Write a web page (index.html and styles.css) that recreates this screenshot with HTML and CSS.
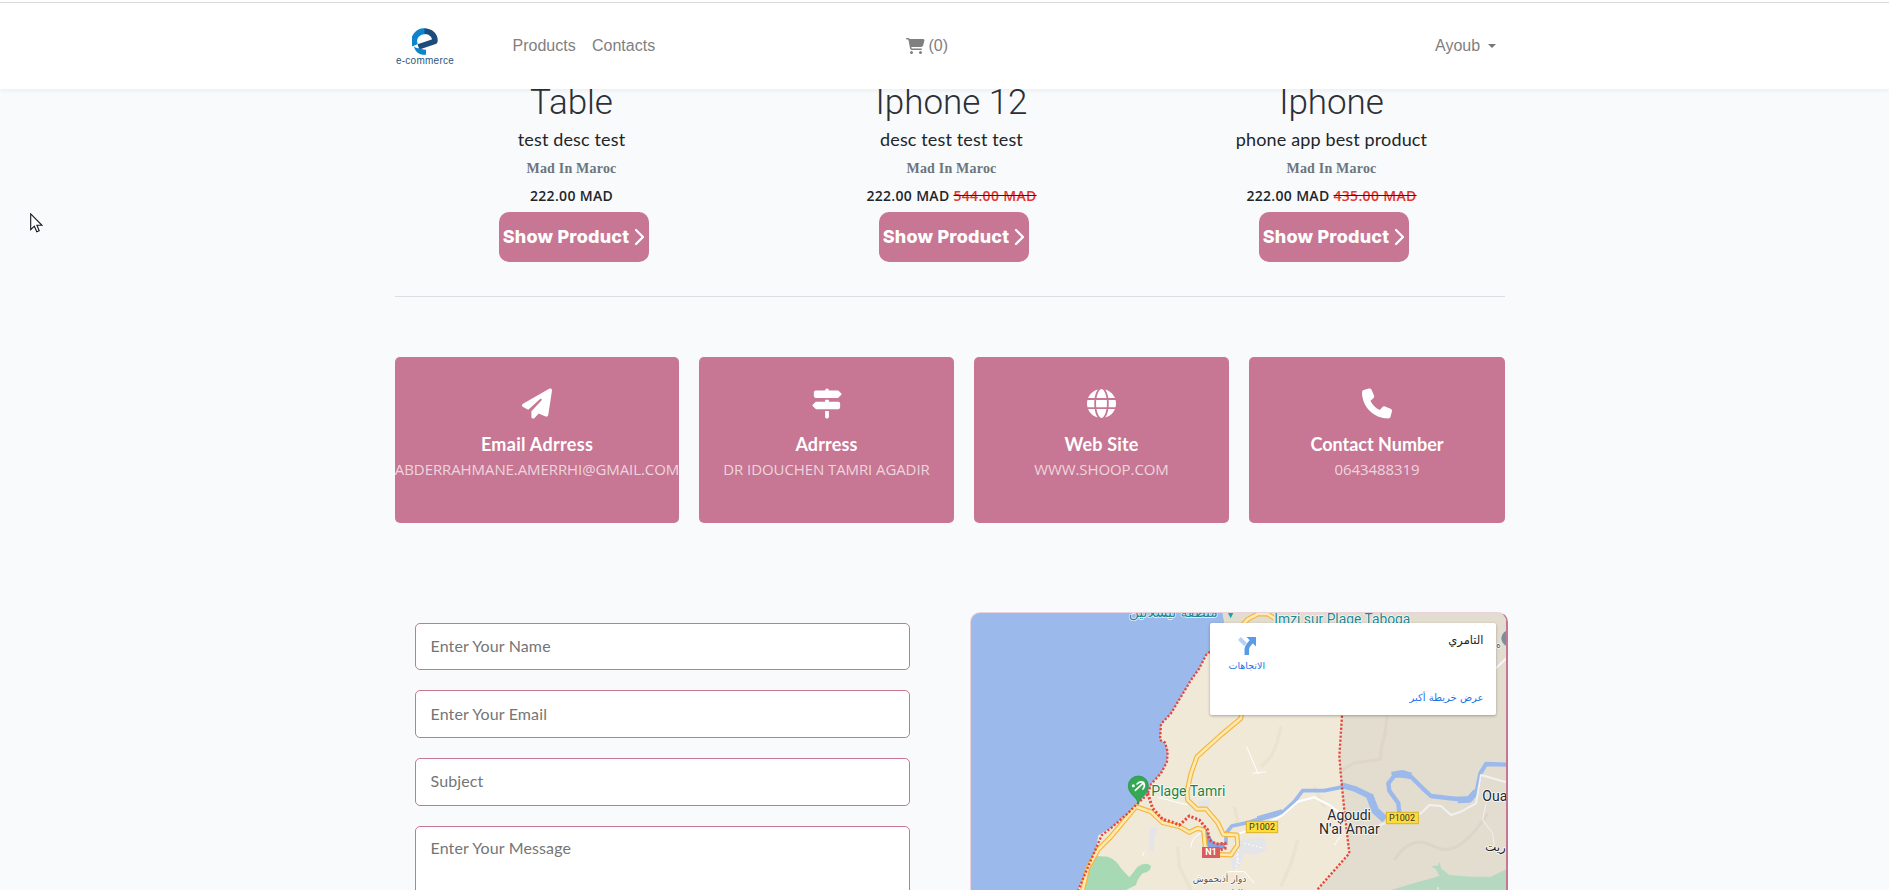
FILE: index.html
```html
<!DOCTYPE html>
<html lang="en">
<head>
<meta charset="utf-8">
<title>e-commerce</title>
<link rel="stylesheet" href="styles.css">
</head>
<body>
<nav class="navbar">
  <div class="container nav-inner">
    <a class="brand">
      <svg class="brand-mark" viewBox="0 0 26 27">
        <path d="M3 17.2A10 10 0 0 1 14 3.4" fill="none" stroke="#0d84cc" stroke-width="6"/>
        <path d="M12.500 3.300C19 3 23.500 8 22.800 13.300L6.500 18.800" fill="none" stroke="#1f4a7c" stroke-width="5.600" stroke-linejoin="round"/>
        <path d="M2 18.500C4 20 5.500 20 8 20.500C10 21 11.500 22 14 21.700V26.800C7 27.300 3 23.500 2 18.500Z" fill="#0d84cc"/>
      </svg>
      <span class="brand-name">e-commerce</span>
    </a>
    <a class="nav-link link-products">Products</a>
    <a class="nav-link link-contacts">Contacts</a>
    <a class="nav-link link-cart">
      <svg class="cart" viewBox="0 0 576 512"><path d="M0 24C0 10.700 10.700 0 24 0H69.500c22 0 41.500 12.800 50.600 32H551c26.300 0 45.500 25 38.600 50.400l-41 152.300c-8.500 31.400-37 53.300-69.500 53.300H170.700l5.400 28.500c2.200 11.300 12.100 19.500 23.600 19.500H488c13.300 0 24 10.700 24 24s-10.700 24-24 24H199.700c-34.600 0-64.300-24.600-70.700-58.500L77.400 54.500c-.7-3.800-4-6.500-7.900-6.500H24C10.700 48 0 37.300 0 24zM128 464a48 48 0 1 1 96 0 48 48 0 1 1-96 0zm336-48a48 48 0 1 1 0 96 48 48 0 1 1 0-96z"/></svg>(0)</a>
    <a class="nav-link link-user">Ayoub<span class="caret"></span></a>
  </div>
</nav>

<main>
  <section class="products">
    <article class="product">
      <h2>Table</h2>
      <p class="desc">test desc test</p>
      <p class="origin">Mad In Maroc</p>
      <p class="price">222.00 MAD</p>
      <a class="btn">Show Product<svg class="chev" viewBox="0 0 11 18"><path d="M2 2l7 7-7 7"/></svg></a>
    </article>
    <article class="product">
      <h2>Iphone 12</h2>
      <p class="desc">desc test test test</p>
      <p class="origin">Mad In Maroc</p>
      <p class="price">222.00 MAD <del><span>544.00 MAD</span></del></p>
      <a class="btn">Show Product<svg class="chev" viewBox="0 0 11 18"><path d="M2 2l7 7-7 7"/></svg></a>
    </article>
    <article class="product">
      <h2>Iphone</h2>
      <p class="desc">phone app best product</p>
      <p class="origin">Mad In Maroc</p>
      <p class="price">222.00 MAD <del><span>435.00 MAD</span></del></p>
      <a class="btn">Show Product<svg class="chev" viewBox="0 0 11 18"><path d="M2 2l7 7-7 7"/></svg></a>
    </article>
  </section>

  <div class="container">
    <hr class="divider">
    <section class="cards">
      <div class="card">
        <svg class="icon" viewBox="0 0 512 512"><path d="M498.100 5.600c10.100 7 15.400 19.100 13.500 31.200l-64 416c-1.500 9.700-7.400 18.200-16 23s-18.900 5.400-28 1.600L284 427.700l-68.500 74.100c-8.900 9.700-22.900 12.900-35.200 8.100S160 493.200 160 480V396.400c0-4 1.500-7.800 4.200-10.700L331.800 202.800c5.800-6.300 5.600-16-.4-22s-15.700-6.400-22-.7L106 360.800 17.700 316.600C7.100 311.300 .3 300.700 0 288.900s5.900-22.800 16.100-28.700l448-256c10.700-6.100 23.900-5.500 34 1.400z"/></svg>
        <h3>Email Adrress</h3>
        <p>ABDERRAHMANE.AMERRHI@GMAIL.COM</p>
      </div>
      <div class="card">
        <svg class="icon" viewBox="0 0 512 512"><path d="M224 32H64C46.300 32 32 46.300 32 64v64c0 17.700 14.300 32 32 32H441.400c4.200 0 8.300-1.700 11.300-4.700l48-48c6.200-6.200 6.200-16.400 0-22.600l-48-48c-3-3-7.100-4.700-11.300-4.700H288c0-17.700-14.300-32-32-32s-32 14.300-32 32zM480 256c0-17.700-14.300-32-32-32H288V192H224v32H70.600c-4.200 0-8.300 1.700-11.300 4.700l-48 48c-6.200 6.200-6.200 16.400 0 22.600l48 48c3 3 7.100 4.700 11.300 4.700H448c17.700 0 32-14.300 32-32V256zM288 480V384H224v96c0 17.700 14.300 32 32 32s32-14.300 32-32z"/></svg>
        <h3>Adrress</h3>
        <p>DR IDOUCHEN TAMRI AGADIR</p>
      </div>
      <div class="card">
        <svg class="icon" viewBox="0 0 512 512"><path d="M352 256c0 22.200-1.200 43.600-3.300 64H163.300c-2.200-20.400-3.300-41.800-3.300-64s1.200-43.600 3.300-64H348.700c2.200 20.400 3.300 41.800 3.300 64zm28.800-64H503.900c5.300 20.500 8.100 41.900 8.100 64s-2.800 43.500-8.100 64H380.800c2.100-20.600 3.200-42 3.200-64s-1.100-43.400-3.200-64zm112.600-32H376.700c-10-63.900-29.800-117.400-55.300-151.600c78.300 20.700 142 77.500 171.900 151.600zm-149.100 0H167.700c6.100-36.400 15.500-68.600 27-94.700c10.500-23.600 22.200-40.700 33.500-51.500C239.400 3.200 248.700 0 256 0s16.600 3.200 27.800 13.800c11.300 10.800 23 27.900 33.500 51.500c11.600 26 20.900 58.200 27 94.700zm-209 0H18.600C48.600 85.900 112.200 29.100 190.600 8.400C165.100 42.600 145.300 96.100 135.300 160zM8.100 192H131.200c-2.100 20.600-3.200 42-3.200 64s1.100 43.400 3.200 64H8.100C2.800 299.500 0 278.100 0 256s2.800-43.500 8.100-64zM194.700 446.600c-11.600-26-20.900-58.200-27-94.600H344.300c-6.100 36.400-15.500 68.600-27 94.600c-10.500 23.600-22.200 40.700-33.500 51.500C272.600 508.800 263.300 512 256 512s-16.600-3.200-27.800-13.800c-11.300-10.800-23-27.900-33.500-51.500zM135.300 352c10 63.900 29.800 117.400 55.300 151.600C112.200 482.900 48.600 426.100 18.600 352H135.300zm358.100 0c-30 74.100-93.600 130.900-171.900 151.600c25.500-34.200 45.200-87.700 55.300-151.600H493.400z"/></svg>
        <h3>Web Site</h3>
        <p>WWW.SHOOP.COM</p>
      </div>
      <div class="card">
        <svg class="icon" viewBox="0 0 512 512"><path d="M164.900 24.600c-7.700-18.600-28-28.500-47.400-23.200l-88 24C12.100 30.200 0 46 0 64C0 311.400 200.600 512 448 512c18 0 33.800-12.100 38.600-29.500l24-88c5.300-19.400-4.600-39.700-23.200-47.400l-96-40c-16.300-6.800-35.200-2.100-46.300 11.600L304.700 368C234.300 334.700 177.300 277.700 144 207.300L193.300 167c13.700-11.200 18.400-30 11.600-46.300l-40-96z"/></svg>
        <h3>Contact Number</h3>
        <p>0643488319</p>
      </div>
    </section>

    <section class="contact">
      <form class="form">
        <input type="text" placeholder="Enter Your Name">
        <input type="text" placeholder="Enter Your Email">
        <input type="text" placeholder="Subject">
        <textarea placeholder="Enter Your Message"></textarea>
      </form>
      <div class="map">
        <svg class="map-canvas" viewBox="30 39 1611 831" preserveAspectRatio="none">
          <rect x="30" y="39" width="1611" height="831" fill="#9cb9eb"/>
          <!-- land -->
          <path fill="#f0e9d8" d="M785 39L790 65 770 110 747 155 735 165 715 205 690 240 660 290 630 340 600 372 597 420 612 428 620 455 618 485 600 520 572 550 560 580 535 606 500 640 455 680 412 706 405 745 375 815 350 870H1641V39Z"/>
          <path fill="#e3ddcf" d="M785 39L790 72H1143V345L1135 470 1142 550 1150 630 1165 760 1070 870H1641V39Z"/>
          <g fill="none" stroke="#d9d2c4" stroke-width="9" opacity=".6" stroke-linejoin="round">
            <path d="M1278 345L1272 400 1262 440 1258 478 1180 488 1135 515"/>
            <path d="M1300 780Q1350 700 1420 740T1580 640"/>
          </g>
          <g fill="none" stroke="#e8dfcb" stroke-width="10" opacity=".6">
            <path d="M960 380L948 430 930 470 900 500"/>
            <path d="M820 620L830 660 800 700"/>
            <path d="M1010 720L990 790 960 860M650 740L655 800 690 870M1060 560L1090 620"/>
          </g>
          <!-- vegetation -->
          <path fill="#a7dab4" d="M408 768L440 770Q465 778 480 805L505 832 530 800Q555 783 570 798 570 815 545 820 530 835 525 855L495 870H364L375 815Z"/>
          <path fill="#b5d9c0" d="M1290 870L1340 855 1400 838 1435 828 1425 808 1410 798 1430 797 1436 785 1440 805 1465 825 1530 830 1590 830 1641 805V870Z"/>
          <!-- settlements -->
          <path fill="#e4e5e8" d="M566 684L590 682 582 710 578 752 563 750ZM710 602L745 600 745 630 720 628ZM840 720L910 712 918 750 880 765 850 760 835 800 815 810 808 765Z"/>
          <!-- river -->
          <g fill="none" stroke="#9cb9eb" stroke-linejoin="round">
            <path stroke-width="11" d="M795 735V700L812 678 860 668 900 655 965 637 1000 605 1025 572 1090 572 1150 560"/>
            <path stroke-width="17" d="M890 657L965 636M1140 555L1180 566 1230 590"/>
            <path stroke-width="23" d="M1225 585L1243 632 1272 658"/>
            <path stroke-width="13" d="M1315 640L1312 610 1285 572 1282 550 1302 525 1350 530 1385 565 1410 588 1460 594 1520 600 1548 570 1558 520 1575 492 1641 494"/>
            <path stroke-width="20" d="M1292 525L1325 520 1350 528M1490 600L1525 598 1545 575"/>
          </g>
          <path fill="#84a4e4" d="M728 672L745 705 760 730 790 728 792 745 760 752 738 745Z"/>
          <!-- minor roads -->
          <g fill="none" stroke="#fff" stroke-width="6" stroke-linejoin="round">
            <path d="M835 700L900 680 965 645 1010 605 1060 592 1105 615 1150 650"/>
            <path d="M1255 675L1380 640 1405 615 1440 618 1470 645 1500 635 1545 610 1560 525 1641 548" stroke="#f2f1f1"/>
            <path d="M1605 205L1641 170" stroke="#f7f7f7"/>
            <path stroke-width="3" d="M857 440L892 523M875 520L915 515M590 592L680 615M550 755L545 768M690 742Q690 715 718 700M1137 710L1120 735M800 815L850 815 880 850"/>
            <path stroke-width="3" d="M1575 610L1565 660 1595 700 1600 740" stroke="#f2f1f1"/>
            <path stroke-width="4" stroke="#fff" stroke-dasharray="4 8" d="M820 730L835 800M835 725L825 810M850 730L910 745"/>
          </g>
          <!-- main roads -->
          <g fill="none" stroke-linejoin="round">
            <path stroke="#f4b63f" stroke-width="15" d="M840 342V355L780 405 708 470 690 520 678 575 680 600 708 627 735 627 770 668 787 703 828 705 830 735 810 765 740 762 732 735 728 690 710 685 685 697 655 680 605 668 570 635 525 620 450 710 412 748 380 805 365 870M845 75L860 58 890 42 920 42 940 55"/>
            <path stroke="#ffe9ae" stroke-width="8" d="M840 342V355L780 405 708 470 690 520 678 575 680 600 708 627 735 627 770 668 787 703 828 705 830 735 810 765 740 762 732 735 728 690 710 685 685 697 655 680 605 668 570 635 525 620 450 710 412 748 380 805 365 870M845 75L860 58 890 42 920 42 940 55"/>
          </g>
          <!-- administrative border -->
          <g fill="none" stroke="#e8453c" stroke-width="7" stroke-dasharray="6.500 5.500">
            <path d="M747 155L735 165 715 205 690 240 660 290 630 340 600 372 597 420 612 428 620 455 618 485 600 520 572 550 560 580"/>
            <path stroke-width="9" d="M560 580L575 625 605 658 630 665 655 675 685 648 715 660 740 690 745 720 765 732 792 730 792 745 770 752"/>
            <path d="M560 583L525 615 500 640 455 680 422 706 405 745 375 815 352 870"/>
            <path d="M1143 347L1135 470 1142 550 1150 630 1165 760 1068 870"/>
          </g>
          <!-- beach pin -->
          <path fill="#34a853" stroke="#1e8e3e" stroke-width="2" d="M532 613C530 590 502 585 502 557A30 29 0 0 1 562 557C562 585 534 590 532 613Z"/>
          <path fill="none" stroke="#fff" stroke-width="5" stroke-linecap="round" d="M523 571L548 548M528 552Q538 542 548 548 553 558 546 567"/>
          <circle cx="517" cy="557" r="4.500" fill="#fff"/>
          <path fill="#12a5b5" d="M801 39H817L809 55Z"/>
          <circle cx="1645" cy="115" r="24" fill="#78909c"/>
          <rect x="1634" y="108" width="7" height="20" fill="#fff"/>
          <!-- labels -->
          <g class="lbl">
            <text x="503" y="50" class="ar teal" textLength="267" lengthAdjust="spacingAndGlyphs">منطقة تيسلالين</text>
            <text x="940" y="71" class="teal place" textLength="408" lengthAdjust="spacingAndGlyphs">Imzi sur Plage Taboga</text>
            <text x="571" y="588" class="green place" textLength="222" lengthAdjust="spacingAndGlyphs">Plage Tamri</text>
            <text x="1099" y="661" class="town" textLength="131" lengthAdjust="spacingAndGlyphs">Agoudi</text>
            <text x="1074" y="703" class="town" textLength="182" lengthAdjust="spacingAndGlyphs">N'ai Amar</text>
            <text x="1564" y="604" class="town">Oua</text>
            <text x="1572" y="752" class="ar town-ar">ريت</text>
            <text x="695" y="846" class="ar small" textLength="161" lengthAdjust="spacingAndGlyphs">دوار أذبحموش</text>
            <text x="1606" y="143" class="ar small">ه</text>
          </g>
          <text x="1385" y="884" class="ar pale">منتزه سوس ماسة</text>
          <text x="755" y="890" class="ar red">التامري</text>
          <rect x="723" y="741" width="54" height="33" fill="#d95c5f"/>
          <text x="750" y="766" class="shield white">N1</text>
          <rect x="856" y="664" width="94" height="34" fill="#ffdc3c" stroke="#d9b32a" stroke-width="3"/>
          <text x="903" y="690" class="shield">P1002</text>
          <rect x="1276" y="637" width="96" height="34" fill="#ffdc3c" stroke="#d9b32a" stroke-width="3"/>
          <text x="1323" y="663" class="shield">P1002</text>
        </svg>
        <div class="place-card" dir="rtl">
          <div class="place-text">
            <span class="place-name">التامري</span>
            <a class="place-more">عرض خريطة أكبر</a>
          </div>
          <a class="directions">
            <svg viewBox="0 0 18 18"><path d="M1.500 1.500L7.500 7.500" stroke="#b5d1f7" stroke-width="4" fill="none"/><path d="M8.800 18V12Q8.800 9.500 14 4" fill="none" stroke="#5a9be8" stroke-width="4.600"/><path d="M8.500 0H18V9.500Z" fill="#5a9be8"/></svg>
            <span>الاتجاهات</span>
          </a>
        </div>
      </div>
    </section>
  </div>
</main>
<svg class="cursor" viewBox="0 0 13 20"><path d="M.7.900V16.600L4.300 13.200 6.800 18.800 9.200 17.700 6.900 12.300H12Z" fill="#fff" stroke="#15151f" stroke-width="1.100"/></svg>
</body>
</html>
```
FILE: styles.css
```css
* { box-sizing: border-box; }
html, body { height: 100%; }
body {
  margin: 0;
  overflow: hidden;
  background: #f8fafc;
  color: #212529;
  font-family: Lato, "Open Sans", sans-serif;
}
h2, h3, p { margin: 0; }
main { height: 831px; margin-top: -30px; padding-top: 30px; overflow: hidden; }
.container { width: 1110px; margin-left: 395px; }

/* navigation */
.navbar {
  position: relative;
  z-index: 2;
  height: 89px;
  padding-top: 2px;
  background: linear-gradient(#fff 2px, #d9dadb 2px, #d9dadb 3px, #fff 3px);
  box-shadow: 0 2px 4px rgba(0, 0, 0, .05);
}
.nav-inner { display: flex; align-items: center; height: 87px; }
.brand { display: flex; flex-direction: column; align-items: center; width: 60px; }
.brand-mark { width: 26px; height: 27px; margin-top: 3px; }
.brand-name {
  color: #2c5580;
  font: 10px/11px "Liberation Sans", sans-serif;
  letter-spacing: .25px;
}
.nav-link {
  display: flex;
  align-items: center;
  color: #808080;
  font: 16px/24px "Liberation Sans", sans-serif;
}
.link-products { margin-left: 57.500px; width: 63px; }
.link-contacts { margin-left: 16.500px; width: 62px; }
.link-cart { margin-left: 252px; gap: 4.500px; width: 60px; }
.cart { width: 18px; height: 16px; fill: #808080; overflow: visible; }
.link-user { margin-left: 469px; gap: 8px; }
.caret { border: 4.800px solid transparent; border-top-color: #777; border-bottom: 0; }

/* products */
.products { display: flex; width: 1140px; margin-left: 381.500px; height: 207px; }
.product { flex: 1; text-align: center; }
.product h2 { font: 300 35px/44px Roboto, sans-serif; margin-top: -8.500px; letter-spacing: -.05px; color: #2c3035; }
.desc { font-size: 18px; line-height: 28px; margin-top: .5px; letter-spacing: .14px; }
.origin { font: bold 14px/22px "Liberation Serif", serif; margin-top: 5px; letter-spacing: .2px; color: #6c757d; }
.price { font: 600 14px/22px "Open Sans", sans-serif; margin-top: 5px; letter-spacing: .32px; }
.price del { color: #212529; }
.price span { color: #e3342f; }
.btn {
  display: flex;
  align-items: center;
  justify-content: center;
  gap: 5px;
  width: 150px;
  height: 50px;
  margin: 5px auto 0 117.500px;
  border-radius: 10px;
  background: #c77693;
  color: #fff;
  font: 800 18px/26px Inter, sans-serif;
  letter-spacing: .2px;
  white-space: nowrap;
}
.chev { width: 11px; height: 18px; fill: none; stroke: #fff; stroke-width: 2.300; stroke-linecap: round; stroke-linejoin: round; }
.divider { height: 1px; margin: 0; border: 0; background: #dcdfe2; }

/* contact cards */
.cards { display: grid; grid-template-columns: 284px 255px 255px 256px; column-gap: 20px; margin-top: 60px; }
.card {
  display: flex;
  flex-direction: column;
  align-items: center;
  height: 166px;
  padding-top: 31px;
  border-radius: 5px;
  background: #c77693;
  color: #fff;
}
.icon { width: 30px; height: 31px; fill: #fff; }
.card:nth-child(3) .icon { width: 29px; }
.card h3 { font-size: 18px; line-height: 26px; margin-top: 12px; letter-spacing: .15px; }
.card:last-child h3 { letter-spacing: 0; }
.card:first-child h3 { letter-spacing: .3px; }
.card p { font: 15px/24px "Open Sans", sans-serif; letter-spacing: -.09px; color: rgba(255, 255, 255, .7); white-space: nowrap; }

/* contact form and map */
.contact { display: flex; align-items: flex-start; margin-top: 89px; }
.form { display: flex; flex: none; flex-direction: column; gap: 20px; width: 495px; margin: 10.500px 59.500px 0 20px; }
.form input, .form textarea {
  width: 100%;
  height: 47.800px;
  padding: 0 15px 2px 14.500px;
  border: 1px solid #c77693;
  border-radius: 5px;
  background: #fff;
  font: 16px/24px Lato, sans-serif;
  letter-spacing: .13px;
  resize: none;
}
.form textarea { height: 120px; padding-top: 9.500px; }
.form ::placeholder { color: #757575; opacity: 1; }
.map {
  position: relative;
  flex: none;
  width: 538px;
  height: 278px;
  overflow: hidden;
  border: 1px solid #ead3dc;
  border-right: 2px solid #c77693;
  border-bottom: 0;
  border-radius: 10px 10px 0 0;
  background: #e3ddcf;
}
.map-canvas { display: block; width: 537px; height: 277px; }
.lbl { paint-order: stroke; stroke: rgba(255, 255, 255, .8); stroke-width: 5px; stroke-linejoin: round; }
.map-canvas text { font-family: Roboto, "DejaVu Sans", sans-serif; }
.map-canvas .ar { font-family: "DejaVu Sans", sans-serif; }
.place { font-size: 42px; }
.teal { fill: #1a8a96; font-size: 42px; }
.green { fill: #1b8345; }
.town { fill: #26272b; font-size: 42px; }
.town-ar { fill: #26272b; font-size: 36px; }
.small { fill: #555; font-size: 27px; }
.pale { fill: #eef6f0; font-size: 30px; }
.red { fill: #d95c5f; font-size: 30px; }
.shield { fill: #37342a; font-size: 27px; text-anchor: middle; }
.white { fill: #fff; font-weight: 700; }
.place-card {
  position: absolute;
  top: 10px;
  right: 10px;
  display: flex;
  justify-content: space-between;
  width: 286px;
  height: 92px;
  padding: 8px 12px 8px 19px;
  border-radius: 2px;
  background: #fff;
  box-shadow: 0 1px 3px rgba(0, 0, 0, .3);
  font-family: "DejaVu Sans", sans-serif;
}
.place-text { display: flex; flex-direction: column; justify-content: space-between; }
.place-name { color: #222; font-size: 11.500px; line-height: 19px; }
.place-more { color: #1a73e8; font-size: 10px; line-height: 18px; }
.directions { display: flex; flex-direction: column; align-items: center; color: #1a73e8; font-size: 9.500px; line-height: 14px; padding-top: 6px; gap: 4px; }
.directions svg { width: 18px; height: 18px; }

.cursor { position: absolute; left: 30px; top: 213px; width: 13px; height: 20px; }
```
